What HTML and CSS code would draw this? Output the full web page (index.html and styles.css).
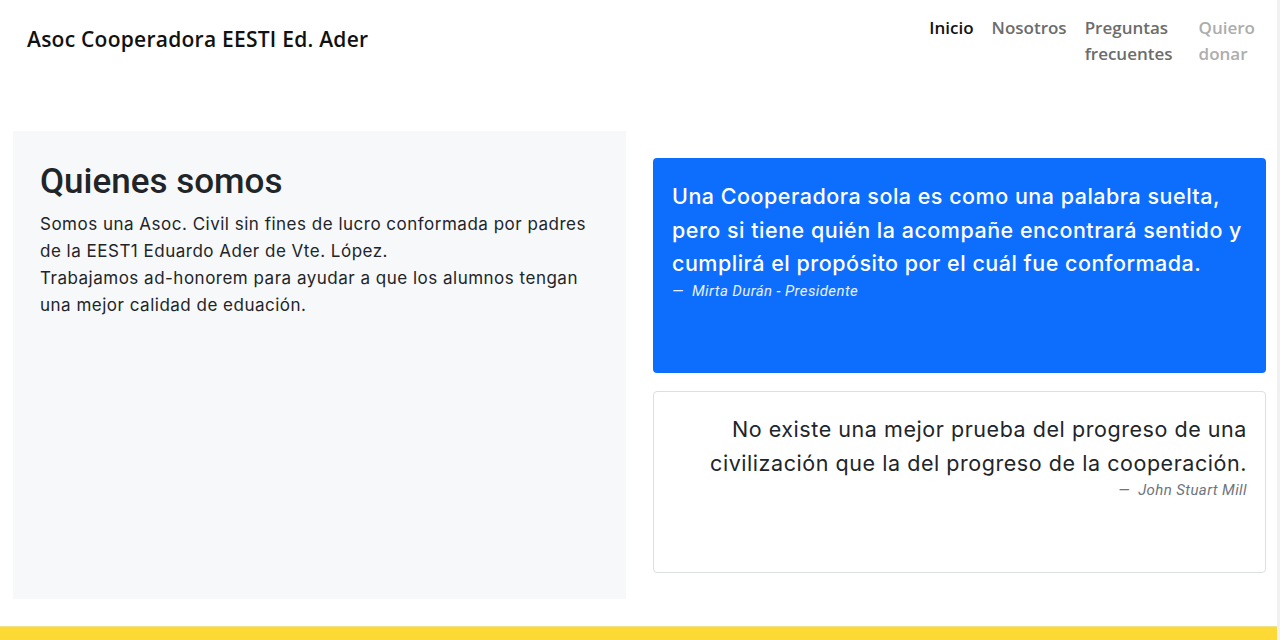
FILE: index.html
```html
<!DOCTYPE html>
<html lang="es">
<head>
<meta charset="utf-8">
<title>Asoc Cooperadora EESTI Ed. Ader</title>
<link rel="stylesheet" href="styles.css">
</head>
<body>
<div class="page">
  <header class="navbar">
    <a class="brand" href="#">Asoc Cooperadora EESTI Ed. Ader</a>
    <nav class="nav">
      <a class="nav-link active" href="#">Inicio</a>
      <a class="nav-link" href="#">Nosotros</a>
      <a class="nav-link" href="#">Preguntas<br>frecuentes</a>
      <a class="nav-link disabled" href="#">Quiero<br>donar</a>
    </nav>
  </header>
  <main class="row">
    <section class="about">
      <h1 class="about-title">Quienes somos</h1>
      <p class="about-text">Somos una Asoc. Civil sin fines de lucro conformada por padres de la EEST1 Eduardo Ader de Vte. López.<br>Trabajamos ad-honorem para ayudar a que los alumnos tengan una mejor calidad de eduación.</p>
    </section>
    <section class="quotes">
      <figure class="card card-primary">
        <blockquote class="quote">Una Cooperadora sola es como una palabra suelta, pero si tiene quién la acompañe encontrará sentido y cumplirá el propósito por el cuál fue conformada.</blockquote>
        <figcaption class="author">— &nbsp;Mirta Durán - Presidente</figcaption>
      </figure>
      <figure class="card card-light">
        <blockquote class="quote">No existe una mejor prueba del progreso de una civilización que la del progreso de la cooperación.</blockquote>
        <figcaption class="author">— &nbsp;John Stuart Mill</figcaption>
      </figure>
    </section>
  </main>
  <footer class="footer"></footer>
</div>
</body>
</html>
```

FILE: styles.css
```css
* { box-sizing: border-box; }
html, body { margin: 0; padding: 0; }
body {
  background: #fff;
  font-family: Inter, Roboto, "Liberation Sans", sans-serif;
  color: #212529;
  height: 640px;
  overflow: hidden;
}
.page {
  height: 640px;
  display: flex;
  flex-direction: column;
  border-right: 3px solid #f1f1f1;
}
.navbar {
  display: flex;
  justify-content: space-between;
  align-items: flex-start;
  padding: 15px 22px 0 27px;
  height: 131px;
}
.brand {
  font-family: "Open Sans", sans-serif;
  font-weight: 600;
  font-size: 21px;
  color: #111;
  text-decoration: none;
  margin-top: 10px;
  letter-spacing: 0.25px;
}
.nav {
  display: flex;
  gap: 18px;
  font-family: "Open Sans", sans-serif;
  font-weight: 600;
  font-size: 17px;
  line-height: 26px;
}
.nav-link {
  color: #6c6c6c;
  text-decoration: none;
}
.nav-link.active { color: #111; }
.nav-link.disabled { color: #adadad; margin-left: 8px; }
.row {
  display: flex;
  gap: 27px;
  padding-left: 13px;
  align-items: flex-start;
}
.about {
  width: 613px;
  height: 468px;
  background: #f7f8fa;
  padding: 28px 27px;
}
.about-title {
  margin: 0 0 6px;
  font-family: Roboto, sans-serif;
  font-size: 35px;
  font-weight: 500;
  line-height: 46px;
}
.about-text {
  margin: 0;
  font-size: 17px;
  line-height: 27px;
  letter-spacing: 0.5px;
}
.quotes {
  width: 613px;
  padding-top: 27px;
  display: flex;
  flex-direction: column;
  gap: 18px;
}
.card {
  margin: 0;
  border-radius: 4px;
  padding: 22px 17px 20px 19px;
}
.card-primary {
  background: #0d6efd;
  color: #fff;
  height: 215px;
}
.card-primary .quote {
  font-weight: 500;
  letter-spacing: 0.5px;
}
.card-light {
  background: #fff;
  border: 1px solid #dcdfe3;
  height: 182px;
  text-align: right;
  padding: 21px 18px 20px 19px;
}
.card-light .quote {
  letter-spacing: 0.55px;
}
.quote {
  margin: 0;
  font-size: 21.5px;
  line-height: 33.5px;
}
.author {
  font-family: Roboto, sans-serif;
  font-size: 15px;
  font-style: italic;
  line-height: 20px;
  margin-top: 0;
  letter-spacing: 0.4px;
}
.card-primary .author { color: #e8f0ff; }
.card-light .author { color: #6c757d; }
.footer {
  margin-top: auto;
  height: 14px;
  background: #fdd935;
  border-top: 1px solid #efe38a;
}
```
